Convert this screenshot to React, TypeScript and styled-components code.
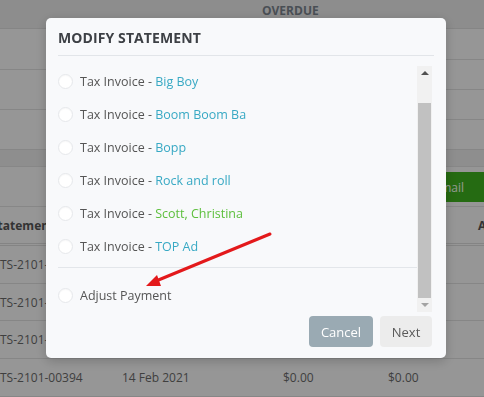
import React from "react";
import styled, { createGlobalStyle } from "styled-components";

const GlobalStyle = createGlobalStyle`
  html, body { margin: 0; padding: 0; overflow: hidden; }
  body { font-family: "Open Sans", "Liberation Sans", sans-serif; background: #fafafa; }
`;

const Page = styled.div`
  width: 500px;
  height: 397px;
  background: #fafafa;
  color: #5c5c5c;
  font-size: 12px;
  display: flex;
  flex-direction: column;
`;

const TopHeader = styled.div`
  height: 27px;
  background: #ebebeb;
  border-bottom: 1px solid #dedede;
  display: grid;
  grid-template-columns: 262px auto 1fr;
  align-items: start;
  padding-top: 3px;
  box-sizing: content-box;
`;

const HeaderLabel = styled.span`
  grid-column: 2;
  font-weight: 700;
  font-size: 12px;
  line-height: 16px;
  color: #7b848e;
`;

const Summary = styled.div`
  height: 128px;
  display: grid;
  grid-template-columns: 240px 1fr;
`;

const SummaryCol = styled.div<{ $rows: number }>`
  display: grid;
  grid-template-rows: repeat(${(p) => p.$rows}, 1fr);
`;

const SummaryCell = styled.div`
  border-bottom: 1px solid #e0e0e0;
`;

const Band = styled.div`
  height: 17px;
  background: #ededed;
  border-bottom: 1px solid #e2e2e2;
`;

const Toolbar = styled.div`
  height: 42px;
  display: flex;
  justify-content: flex-end;
  align-items: flex-start;
  padding: 5px 6px 0 0;
  box-sizing: border-box;
  border-bottom: 1px solid #e2e2e2;
`;

const GreenButton = styled.button`
  height: 30px;
  padding: 0 30px 0 14px;
  border: none;
  border-radius: 3px;
  background: #3fb21e;
  color: #f4fff0;
  font-family: inherit;
  font-size: 12px;
`;

const TableGrid = styled.div`
  display: grid;
  grid-template-columns: 122px 161px 105px 90px 1fr;
`;

const HeadRow = styled(TableGrid)`
  height: 38px;
  align-items: center;
  border-bottom: 3px double #dcdcdc;
  font-weight: 700;
  color: #555;
`;

const HeadCell = styled.div<{ $shift?: number }>`
  margin-left: ${(p) => p.$shift ?? 0}px;
  white-space: nowrap;
`;

const BodyRow = styled(TableGrid)`
  height: 39px;
  align-items: center;
  border-bottom: 1px solid #e0e0e0;
  color: #6a6a6a;
`;

const Cell = styled.div`
  white-space: nowrap;
`;

const Backdrop = styled.div`
  position: fixed;
  inset: 0;
  background: rgba(0, 0, 0, 0.4);
`;

const Modal = styled.div`
  position: fixed;
  left: 46px;
  top: 18px;
  width: 400px;
  height: 340px;
  background: #f8f9fb;
  border-radius: 5px;
  box-shadow: 0 3px 12px rgba(0, 0, 0, 0.2);
  display: flex;
  flex-direction: column;
`;

const ModalHeader = styled.div`
  margin: 0 12px;
  padding: 10px 0 7px;
  border-bottom: 1px solid #e2e5e9;
`;

const Title = styled.h2`
  margin: 0;
  font-size: 14px;
  line-height: 20px;
  font-weight: 700;
  color: #3d4045;
  letter-spacing: 0.1px;
`;

const ModalBody = styled.div`
  margin-top: 10px;
  height: 246px;
  padding: 0 14px 0 12px;
  display: flex;
`;

const List = styled.div`
  flex: 1;
  margin-top: -1px;
  display: flex;
  flex-direction: column;
`;

const Option = styled.label`
  height: 33px;
  display: flex;
  align-items: center;
  gap: 7px;
  font-size: 12.5px;
  color: #555;
  cursor: pointer;
`;

const Radio = styled.span`
  width: 15px;
  height: 15px;
  box-sizing: border-box;
  border-radius: 50%;
  background: #fff;
  border: 1px solid #e6e8eb;
  box-shadow: inset 0 1px 1px rgba(0, 0, 0, 0.03);
  flex: none;
`;

const Name = styled.span<{ $tone: "blue" | "green" }>`
  color: ${(p) => (p.$tone === "green" ? "#5cbf3c" : "#38a9c4")};
`;

const Divider = styled.div`
  height: 1px;
  background: #e3e6ea;
  margin: 4px 0 11px;
`;

const Scrollbar = styled.div`
  width: 15px;
  background: #f1f1f1;
  display: flex;
  flex-direction: column;
`;

const ScrollButton = styled.div<{ $dir: "up" | "down" }>`
  height: 14px;
  display: flex;
  align-items: center;
  justify-content: center;
  &::before {
    content: "";
    width: 0;
    height: 0;
    border-left: 4px solid transparent;
    border-right: 4px solid transparent;
    ${(p) =>
      p.$dir === "up"
        ? "border-bottom: 4px solid #505050;"
        : "border-top: 4px solid #a3a3a3;"}
  }
`;

const Track = styled.div`
  flex: 1;
  display: flex;
  flex-direction: column;
  padding: 23px 1px 0;
`;

const Thumb = styled.div`
  flex: 1;
  background: #c1c1c1;
`;

const Footer = styled.div`
  display: flex;
  justify-content: flex-end;
  gap: 7px;
  padding: 4px 14px 0;
`;

const Button = styled.button<{ $variant: "muted" | "light" }>`
  height: 31px;
  border: none;
  border-radius: 4px;
  font-family: inherit;
  font-size: 13px;
  padding: 0;
  width: ${(p) => (p.$variant === "muted" ? 64 : 52)}px;
  background: ${(p) => (p.$variant === "muted" ? "#9aaab3" : "#ececec")};
  color: ${(p) => (p.$variant === "muted" ? "#ffffff" : "#5a5a5a")};
`;

const ArrowLayer = styled.svg`
  position: fixed;
  left: 0;
  top: 0;
  width: 484px;
  height: 397px;
  pointer-events: none;
`;

const invoices: { name: string; tone: "blue" | "green" }[] = [
  { name: "Big Boy", tone: "blue" },
  { name: "Boom Boom Ba", tone: "blue" },
  { name: "Bopp", tone: "blue" },
  { name: "Rock and roll", tone: "blue" },
  { name: "Scott, Christina", tone: "green" },
  { name: "TOP Ad", tone: "blue" },
];

const rows = [
  ["TS-2101-00391", "14 Feb 2021", "$0.00", "$0.00"],
  ["TS-2101-00392", "14 Feb 2021", "$0.00", "$0.00"],
  ["TS-2101-00393", "14 Feb 2021", "$0.00", "$0.00"],
  ["TS-2101-00394", "14 Feb 2021", "$0.00", "$0.00"],
];

export default function App() {
  return (
    <>
      <GlobalStyle />
      <Page>
        <TopHeader>
          <HeaderLabel>OVERDUE</HeaderLabel>
        </TopHeader>
        <Summary>
          <SummaryCol $rows={3}>
            <SummaryCell />
            <SummaryCell />
            <SummaryCell />
          </SummaryCol>
          <SummaryCol $rows={4}>
            <SummaryCell />
            <SummaryCell />
            <SummaryCell />
            <SummaryCell />
          </SummaryCol>
        </Summary>
        <Band />
        <Toolbar>
          <GreenButton>Email</GreenButton>
        </Toolbar>
        <HeadRow>
          <HeadCell $shift={-9}>Statement</HeadCell>
          <HeadCell>Date</HeadCell>
          <HeadCell>Total</HeadCell>
          <HeadCell>Paid</HeadCell>
          <HeadCell>Amount</HeadCell>
        </HeadRow>
        {rows.map((r) => (
          <BodyRow key={r[0]}>
            {r.map((c, i) => (
              <Cell key={i}>{c}</Cell>
            ))}
          </BodyRow>
        ))}
      </Page>
      <Backdrop />
      <Modal>
        <ModalHeader>
          <Title>MODIFY STATEMENT</Title>
        </ModalHeader>
        <ModalBody>
          <List>
            {invoices.map((inv) => (
              <Option key={inv.name}>
                <Radio />
                <span>
                  Tax Invoice - <Name $tone={inv.tone}>{inv.name}</Name>
                </span>
              </Option>
            ))}
            <Divider />
            <Option>
              <Radio />
              <span>Adjust Payment</span>
            </Option>
          </List>
          <Scrollbar>
            <ScrollButton $dir="up" />
            <Track>
              <Thumb />
            </Track>
            <ScrollButton $dir="down" />
          </Scrollbar>
        </ModalBody>
        <Footer>
          <Button $variant="muted">Cancel</Button>
          <Button $variant="light">Next</Button>
        </Footer>
      </Modal>
      <ArrowLayer viewBox="0 0 484 397">
        <line x1="270" y1="234" x2="156" y2="281" stroke="#e3191b" strokeWidth="3" strokeLinecap="round" />
        <polygon points="146,286 161,286 157,275" fill="#e3191b" />
      </ArrowLayer>
    </>
  );
}
